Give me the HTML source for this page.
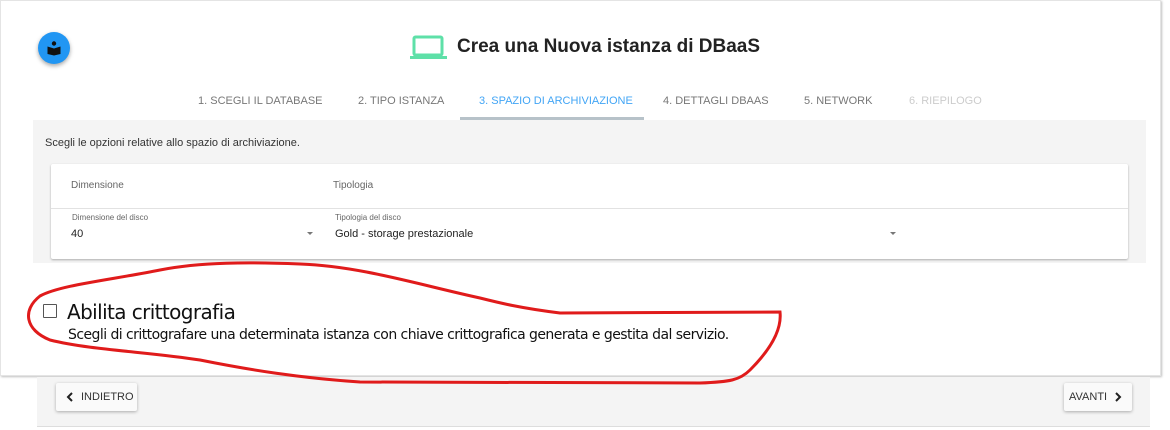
<!DOCTYPE html>
<html><head><meta charset="utf-8"><style>
*{margin:0;padding:0;box-sizing:border-box}
body{width:1170px;height:430px;background:#fff;font-family:"Liberation Sans",Arial,sans-serif;position:relative;overflow:hidden}
.card{position:absolute;left:0;top:0;width:1161px;height:376px;background:#fff;border:1px solid #e4e4e4;box-shadow:1px 1px 2px rgba(0,0,0,.25)}
.fab{position:absolute;left:38px;top:32px;width:32px;height:32px;border-radius:50%;background:#2196f3;box-shadow:0 2px 4px rgba(0,0,0,.35)}
.title{position:absolute;left:457px;top:36px;font-size:19px;font-weight:bold;color:#222}
.tabs{position:absolute;left:0;top:95px;font-size:11px;color:#777}
.tabs span{position:absolute;white-space:nowrap}
.grey{position:absolute;left:33px;top:120px;width:1113px;height:143px;background:#f4f4f4}
.inner{position:absolute;left:51px;top:164px;width:1077px;height:95px;background:#fff;box-shadow:0 1px 2px rgba(0,0,0,.3);border-radius:2px}
.small{position:absolute;font-size:9px;color:#666;white-space:nowrap}
.foot{position:absolute;left:37px;top:377px;width:1113px;height:50px;background:#f4f4f4;border-bottom:1px solid #ddd}
.btn{position:absolute;top:383px;height:28px;background:#fafafa;box-shadow:0 1px 3px rgba(0,0,0,.3);border-radius:2px;font-size:11px;color:#333;line-height:28px}
.btn svg{position:absolute;top:9px}
</style></head><body>
<div class="card"></div>
<div class="fab"><svg width="32" height="32" viewBox="0 0 32 32"><circle cx="16" cy="11.5" r="2.2" fill="#111"/><path d="M9.5 14.5 L16 16.5 L22.5 14.5 L22.5 22 L16 23.5 L9.5 22Z" fill="#111"/></svg></div>
<svg style="position:absolute;left:410px;top:35px" width="37" height="26" viewBox="0 0 37 26"><rect x="4" y="2" width="28" height="18" rx="1.5" fill="none" stroke="#5ee0a8" stroke-width="3"/><rect x="0" y="21" width="37" height="3" fill="#5ee0a8"/></svg>
<div class="title">Crea una Nuova istanza di DBaaS</div>
<div class="tabs">
<span style="left:198px">1. SCEGLI IL DATABASE</span>
<span style="left:358px">2. TIPO ISTANZA</span>
<span style="left:479px;color:#42a5f5">3. SPAZIO DI ARCHIVIAZIONE</span>
<span style="left:663px">4. DETTAGLI DBAAS</span>
<span style="left:804px">5. NETWORK</span>
<span style="left:909px;color:#ccc">6. RIEPILOGO</span>
</div>
<div class="grey"></div>
<div style="position:absolute;left:460px;top:117px;width:184px;height:3px;background:#b7c2c9"></div>
<div style="position:absolute;left:45px;top:137px;font-size:11px;color:#333">Scegli le opzioni relative allo spazio di archiviazione.</div>
<div class="inner"></div>
<div class="small" style="left:71px;top:180px;font-size:10px">Dimensione</div>
<div class="small" style="left:333px;top:180px;font-size:10px">Tipologia</div>
<div style="position:absolute;left:51px;top:208px;width:1077px;height:1px;background:#e2e2e2"></div>
<div class="small" style="left:72px;top:213px;font-size:8px">Dimensione del disco</div>
<div class="small" style="left:335px;top:213px;font-size:8px">Tipologia del disco</div>
<div style="position:absolute;left:71px;top:228px;font-size:11px;color:#222">40</div>
<div style="position:absolute;left:335px;top:228px;font-size:11px;color:#222">Gold - storage prestazionale</div>
<div style="position:absolute;left:307px;top:232px;border:3px solid transparent;border-top:3px solid #777"></div>
<div style="position:absolute;left:890px;top:232px;border:3px solid transparent;border-top:3px solid #777"></div>
<div style="position:absolute;left:43px;top:304px;width:14px;height:14px;border:1px solid #555;border-radius:1px"></div>
<div style="position:absolute;left:67px;top:300px;font-size:20px;color:#111;font-family:'DejaVu Sans',sans-serif;letter-spacing:-.6px">Abilita crittografia</div>
<div style="position:absolute;left:68px;top:327px;font-size:14px;color:#111;font-family:'DejaVu Sans',sans-serif;letter-spacing:-.55px">Scegli di crittografare una determinata istanza con chiave crittografica generata e gestita dal servizio.</div>
<div class="foot"></div>
<div class="btn" style="left:56px;width:81px;padding-left:25px"><svg style="left:10px" width="8" height="10" viewBox="0 0 8 10"><path d="M6 1 L2 5 L6 9" fill="none" stroke="#222" stroke-width="2"/></svg>INDIETRO</div>
<div class="btn" style="left:1064px;width:68px;padding-left:5px">AVANTI<svg style="left:50px" width="8" height="10" viewBox="0 0 8 10"><path d="M2 1 L6 5 L2 9" fill="none" stroke="#222" stroke-width="2"/></svg></div>
<svg style="position:absolute;left:0;top:0" width="1170" height="430"><path d="M40 296 C60 285 110 280 160 270 C200 262 250 262 300 264 C360 266 420 285 480 298 C500 303 520 308 560 313 L780 312 C782 330 770 350 750 370 C740 380 730 382 700 383 L360 382 C300 378 250 370 200 360 C150 352 90 350 50 340 C25 330 22 310 40 296Z" fill="none" stroke="#e01b1b" stroke-width="3"/></svg>
</body></html>
